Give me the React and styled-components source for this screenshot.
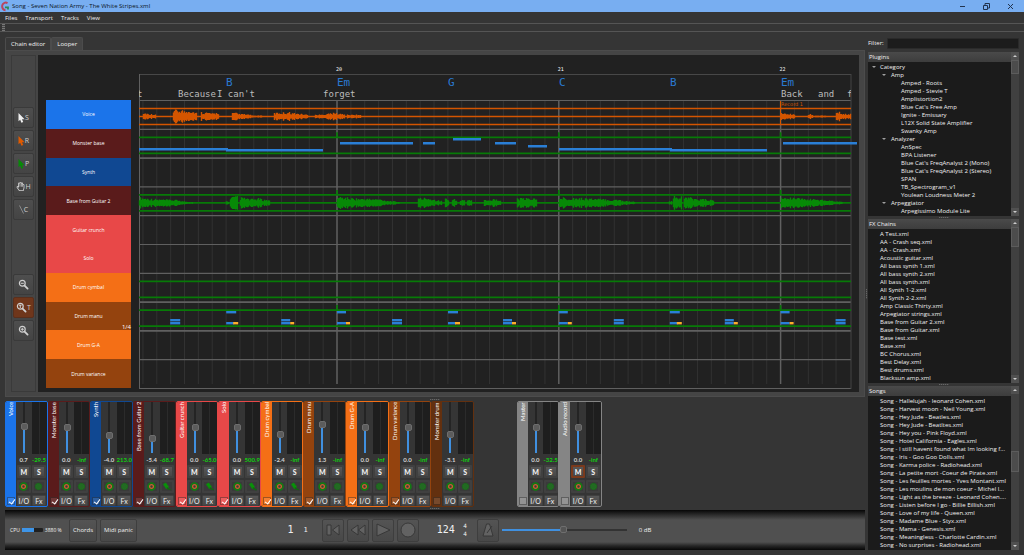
import React from "react";
import styled, { createGlobalStyle, css } from "styled-components";
import { FaRegHandPaper } from "react-icons/fa";

const GlobalStyle = createGlobalStyle`
  * {
    box-sizing: border-box;
  }

  body {
    margin: 0;
    background: #353535;
    color: #f0f0f0;
    font-family: "Open Sans", "Noto Sans", sans-serif;
    font-size: 6px;
    line-height: 8px;
  }

  button, input {
    font: inherit;
    color: inherit;
    margin: 0;
    padding: 0;
  }

  svg {
    flex-shrink: 0;
  }

  ul {
    list-style: none;
    margin: 0;
    padding: 0;
  }
`;

const NARROW_FONT = `Lato, "Open Sans", sans-serif`;
const MONO_FONT = `"DejaVu Sans Mono", "Liberation Mono", monospace`;

const Window = styled.div`
  min-height: 100vh;
  display: flex;
  flex-direction: column;
`;

/* ---------- Title bar and menus ---------- */

const TitleBar = styled.header`
  height: 12px;
  display: flex;
  align-items: center;
  gap: 3px;
  background: #78aef1;
  color: #0c1424;
`;

const Title = styled.h1`
  flex: 1;
  margin: 0;
  font-size: 6px;
  font-weight: 400;
`;

const WindowButtons = styled.div`
  display: flex;
  padding-right: 2px;
`;

const WindowButton = styled.button`
  width: 24px;
  height: 12px;
  border: none;
  background: none;
  display: flex;
  align-items: center;
  justify-content: center;
`;

const MenuBar = styled.nav`
  height: 11px;
  display: flex;
  align-items: center;
  gap: 8px;
  padding: 0 5px;
`;

const MenuButton = styled.button`
  border: none;
  background: none;
`;

const DockBar = styled.div`
  height: 9px;
  border-top: 1px solid #555;
  border-bottom: 1px solid #555;
  padding: 0 2px;

  &::before {
    content: "";
    display: block;
    width: 3px;
    height: 7px;
    background: repeating-linear-gradient(#777 0 1px, #444 1px 2px);
  }
`;

/* ---------- Page columns ---------- */

const Workspace = styled.main`
  flex: 1;
  display: flex;
  padding: 5px;
`;

const LeftColumn = styled.div`
  flex: 1;
  min-width: 0;
  display: flex;
  flex-direction: column;
`;

const RightColumn = styled.aside`
  width: 151px;
  display: flex;
  flex-direction: column;
`;

// Handle of a splitter between two panes
const Grip = styled.div`
  flex: none;
  ${({ $vertical, $size }) => ($vertical ? `width: ${$size}px;` : `height: ${$size}px;`)}
  display: flex;
  align-items: center;
  justify-content: center;

  &::before {
    content: "";
    width: ${({ $vertical }) => ($vertical ? "1px" : "10px")};
    height: ${({ $vertical }) => ($vertical ? "10px" : "1px")};
    background: repeating-linear-gradient(
      ${({ $vertical }) => ($vertical ? "to bottom" : "to right")},
      #666 0 1px,
      #444 1px 2px
    );
  }
`;

const Tabs = styled.div`
  display: flex;
  height: 13px;
`;

const Tab = styled.button`
  border: 1px solid #4c4c4c;
  border-bottom: none;
  border-radius: 2px 2px 0 0;
  padding: 0 5px;
  background: ${({ $active }) => ($active ? "#454545" : "#383838")};
`;

const LooperPanel = styled.section`
  display: flex;
  gap: 2px;
  padding: 4px 5px;
  background: #454545;
  border: 1px solid #4c4c4c;
`;

const ToolStrip = styled.div`
  width: 25px;
  display: flex;
  flex-direction: column;
  align-items: center;
  gap: 54px;
  padding-top: 51px;
  border: 1px solid #3a3a3a;
`;

const ToolGroup = styled.div`
  display: flex;
  flex-direction: column;
  gap: 2px;
`;

const ToolButton = styled.button`
  width: 21px;
  height: 21px;
  display: flex;
  align-items: center;
  justify-content: center;
  font-size: 7px;
  color: #d0d0d0;
  border: 1px solid ${({ $active }) => ($active ? "#5a2f1c" : "#3a3a3a")};
  border-radius: 2px;
  background: ${({ $active }) => ($active ? "#6f361b" : "linear-gradient(#4e4e4e, #444)")};
`;

/* ---------- Arrangement ---------- */

const Canvas = styled.div`
  flex: 1;
  min-width: 0;
  display: flex;
  gap: 8px;
  padding: 0 8px;
  background: #212121;
`;

const TrackNames = styled.ul`
  width: 85px;
  height: 288px;
  margin-top: 45px;
  display: flex;
  flex-direction: column;
  font-size: 5px;
`;

const TrackName = styled.li`
  flex: 1;
  position: relative;
  display: flex;
  align-items: center;
  justify-content: center;
  background: ${({ $color }) => $color};
  color: #fff;
`;

const Division = styled.span`
  position: absolute;
  right: 0;
  bottom: 0;
  font-size: 6px;
  line-height: 6px;
`;

const Timeline = styled.svg`
  flex: 1;
  min-width: 0;
  height: 337px;
  overflow: visible;
  font-family: ${MONO_FONT};
`;

/* ---------- Mixer ---------- */

const Mixer = styled.section`
  max-width: 597px;
  display: grid;
  grid-template-columns: repeat(14, 1fr);
  font-family: ${NARROW_FONT};
`;

const Strip = styled.article`
  grid-column: ${({ $column }) => $column};
  min-width: 0;
  height: 106px;
  display: flex;
  border: 1px solid ${({ $color }) => $color};
  border-radius: 2px;
  overflow: hidden;
`;

const StripSide = styled.div`
  width: 10px;
  display: flex;
  flex-direction: column;
  align-items: center;
  justify-content: space-between;
  padding-bottom: 1px;
  background: ${({ $color }) => $color};
`;

const StripName = styled.label`
  height: 90px;
  writing-mode: vertical-rl;
  transform: rotate(180deg);
  text-align: right;
  color: #fff;
`;

const StripCheck = styled.input`
  appearance: none;
  width: 8px;
  height: 8px;
  border: 1px solid rgba(0, 0, 0, 0.35);
  background: rgba(255, 255, 255, 0.12);

  &:checked::before {
    content: "";
    display: block;
    width: 3px;
    height: 5px;
    margin-left: 2px;
    border: solid #fff;
    border-width: 0 1px 1px 0;
    transform: rotate(35deg);
  }
`;

const StripBody = styled.div`
  flex: 1;
  min-width: 0;
  display: flex;
  flex-direction: column;
  align-items: center;
`;

const FaderRow = styled.div`
  align-self: stretch;
  flex: none;
  height: 52px;
  display: flex;
  justify-content: space-between;
  padding-left: 4px;
`;

const Fader = styled.input`
  appearance: none;
  writing-mode: vertical-lr;
  direction: rtl;
  width: 8px;
  height: 51px;
  background: none;

  &::-webkit-slider-runnable-track {
    width: 2px;
    background: linear-gradient(
      to top,
      #4090e0 ${({ value }) => value}%,
      #242424 ${({ value }) => value}%
    );
  }

  &::-webkit-slider-thumb {
    appearance: none;
    width: 7px;
    height: 7px;
    margin-left: -2px;
    border: 1px solid #6e6e6e;
    border-radius: 2px;
    background: #5c5c5c;
  }
`;

const Meter = styled.div`
  width: 15px;
  background: linear-gradient(to right, #1e1e1e 7px, #2b2b2b 7px 8px, #1e1e1e 8px);
`;

const Levels = styled.div`
  align-self: stretch;
  flex: none;
  height: 11px;
  display: flex;
  align-items: center;
`;

const Level = styled.output`
  width: 50%;
  white-space: nowrap;
  text-align: center;
  font-weight: 700;
  color: ${({ $green }) => ($green ? "#10d010" : "#d4d4d4")};
`;

const StripButtons = styled.div`
  display: grid;
  grid-template-columns: 14px 14px;
  gap: 2px 1px;
`;

const StripButton = styled.button`
  height: ${({ $low }) => ($low ? "11px" : "13px")};
  display: flex;
  align-items: center;
  justify-content: center;
  overflow: hidden;
  border: ${({ $low }) => ($low ? "1px" : "2px")} solid ${({ $lit }) => ($lit ? "#7a3a1c" : "#404040")};
  border-radius: 1px;
  background: ${({ $dark }) => ($dark ? "#3a3a3a" : "linear-gradient(#585858, #474747)")};
  font-size: 7px;
  font-weight: ${({ $low }) => ($low ? 400 : 900)};
`;

/* ---------- Transport ---------- */

const Transport = styled.footer`
  height: 40px;
  display: flex;
  align-items: center;
  padding: 0 5px;
  background: linear-gradient(#060606, #252525 4px, #505050 10px, #505050 32px, #252525 36px, #060606);
`;

const Cpu = styled.div`
  width: 59px;
  display: flex;
  align-items: center;
  gap: 2px;
  font-size: 5px;
`;

const CpuBar = styled.div`
  width: 21px;
  height: 4px;
  border-radius: 1px;
  background: #202020;

  &::before {
    content: "";
    display: block;
    width: 12px;
    height: 4px;
    background: #3e95e8;
  }
`;

const buttonFace = css`
  height: 23px;
  border: 1px solid #3e3e3e;
  border-radius: 2px;
  background: linear-gradient(#545454, #484848);
`;

const TextButton = styled.button`
  ${buttonFace}
  padding: 0 3px;
  margin-right: 3px;
`;

const TransportButton = styled.button`
  ${buttonFace}
  width: 22px;
  display: flex;
  align-items: center;
  justify-content: center;
`;

const Position = styled.div`
  width: 182px;
  display: flex;
  justify-content: flex-end;
  align-items: center;
  gap: 10px;
  padding-right: 14px;
  font-family: ${MONO_FONT};
`;

const Beat = styled.span`
  font-size: ${({ $small }) => ($small ? "7px" : "10px")};
`;

const TransportKeys = styled.div`
  display: flex;
  gap: 3px;
`;

const Tempo = styled.div`
  width: 58px;
  display: flex;
  align-items: center;
  justify-content: space-between;
  padding: 0 10px 0 18px;
  font-family: ${MONO_FONT};
`;

const Bpm = styled.span`
  font-size: 10px;
`;

const Signature = styled.span`
  display: flex;
  flex-direction: column;
`;

const Volume = styled.input`
  appearance: none;
  width: 125px;
  height: 8px;
  margin: 0 12px 0 3px;
  background: none;

  &::-webkit-slider-runnable-track {
    height: 2px;
    background: linear-gradient(to right, #4090e0 50%, #333 50%);
  }

  &::-webkit-slider-thumb {
    appearance: none;
    width: 7px;
    height: 7px;
    margin-top: -3px;
    border: 1px solid #6e6e6e;
    border-radius: 2px;
    background: #555;
  }
`;

/* ---------- Browser lists ---------- */

const FilterRow = styled.div`
  height: 12px;
  margin-bottom: 3px;
  display: flex;
  align-items: center;
  gap: 3px;
`;

const FilterInput = styled.input`
  flex: 1;
  min-width: 0;
  height: 11px;
  border: 1px solid #2a2a2a;
  border-radius: 1px;
  background: #1c1c1c;
`;

const ListPanel = styled.section`
  flex: 1 1 0;
  min-height: 0;
  display: flex;
`;

const ListArea = styled.div`
  flex: 1;
  min-width: 0;
  background: #1b1b1b;
`;

const ListTitle = styled.h2`
  height: 10px;
  margin: 0 0 1px;
  padding-left: 1px;
  background: linear-gradient(#4a4a4a, #3d3d3d);
  font-size: 6px;
  line-height: 10px;
  font-weight: 400;
`;

const Row = styled.li`
  height: 8px;
  padding-left: ${({ $level }) => ($level === 2 ? "33px" : $level === 1 ? "23px" : "12px")};
  white-space: nowrap;
  position: relative;
`;

const Caret = styled.span`
  position: absolute;
  top: 3px;
  left: ${({ $level }) => ($level === 1 ? "14px" : "4px")};
  border: 2px solid transparent;
  border-top-color: #a0a0a0;
  border-bottom: none;
`;

const ScrollBar = styled.div`
  width: 8px;
  display: flex;
  flex-direction: column;
  background: #404040;
`;

const ScrollArrow = styled.button`
  width: 8px;
  height: 8px;
  border: none;
  background: #505050;
  display: flex;
  align-items: center;
  justify-content: center;

  &::before {
    content: "";
    border: 2px solid transparent;
    ${({ $up }) =>
      $up
        ? "border-bottom-color: #ccc; border-top: none;"
        : "border-top-color: #ccc; border-bottom: none;"}
  }
`;

const ScrollTrack = styled.div`
  flex: 1;
  padding-top: ${({ $offset }) => $offset}px;
`;

const ScrollThumb = styled.div`
  height: ${({ $size }) => $size}px;
  border: 1px solid #5c5c5c;
  background: #4c4c4c;
`;

/* ---------- Data ---------- */

const tracks = [
  { name: "Voice", color: "#1b74ea" },
  { name: "Monster base", color: "#5a1b1b" },
  { name: "Synth", color: "#104892" },
  { name: "Base from Guitar 2", color: "#5a1b1b" },
  { name: "Guitar crunch", color: "#e84848" },
  { name: "Solo", color: "#e84848" },
  { name: "Drum cymbal", color: "#f46f16" },
  { name: "Drum manu", color: "#94430e", division: "1/4" },
  { name: "Drum G-A", color: "#f46f16" },
  { name: "Drum variance", color: "#94430e" },
];

const strips = [
  { name: "Voice", color: "#1b74ea", fader: 53, gain: "0.7", peak: "-29.5" },
  { name: "Monster base", color: "#5a1b1b", fader: 49, gain: "0.0", peak: "-inf" },
  { name: "Synth", color: "#104892", fader: 31, gain: "-4.0", peak: "213.0" },
  { name: "Base from Guitar 2", color: "#5a1b1b", fader: 26, gain: "-5.4", peak: "-68.7", jack: true },
  { name: "Guitar crunch", color: "#e84848", fader: 49, gain: "0.0", peak: "-65.0", jack: true },
  { name: "Solo", color: "#e84848", fader: 49, gain: "0.0", peak: "500.9", jack: true },
  { name: "Drum cymbal", color: "#f46f16", fader: 35, gain: "-2.4", peak: "-inf", jack: true },
  { name: "Drum manu", color: "#94430e", fader: 57, gain: "1.3", peak: "-inf" },
  { name: "Drum G-A", color: "#f46f16", fader: 49, gain: "0.0", peak: "-inf" },
  { name: "Drum variance", color: "#94430e", fader: 49, gain: "0.0", peak: "-inf" },
  { name: "Monster drum", color: "#63300f", fader: 33, gain: "-3.1", peak: "-inf", off: true },
  { name: "Master", color: "#858585", fader: 49, gain: "0.0", peak: "-32.5", off: true, column: 13 },
  { name: "Audio record", color: "#858585", fader: 49, gain: "0.0", peak: "-inf", off: true, muted: true, column: 14 },
];

const plugins = [
  [0, "Category"],
  [1, "Amp"],
  [2, "Amped - Roots"],
  [2, "Amped - Stevie T"],
  [2, "Amplistortion2"],
  [2, "Blue Cat's Free Amp"],
  [2, "Ignite - Emissary"],
  [2, "L12X Solid State Amplifier"],
  [2, "Swanky Amp"],
  [1, "Analyzer"],
  [2, "AnSpec"],
  [2, "BPA Listener"],
  [2, "Blue Cat's FreqAnalyst 2 (Mono)"],
  [2, "Blue Cat's FreqAnalyst 2 (Stereo)"],
  [2, "SPAN"],
  [2, "TB_Spectrogram_v1"],
  [2, "Youlean Loudness Meter 2"],
  [1, "Arpeggiator"],
  [2, "Arpegissimo Module Lite"],
];

const chains = [
  "A Test.xml", "AA - Crash seq.xml", "AA - Crash.xml", "Acoustic guitar.xml",
  "All bass synth 1.xml", "All bass synth 2.xml", "All bass synth.xml",
  "All Synth 1-2.xml", "All Synth 2-2.xml", "Amp Classic Thirty.xml",
  "Arpegiator strings.xml", "Base from Guitar 2.xml", "Base from Guitar.xml",
  "Base test.xml", "Base.xml", "BC Chorus.xml", "Best Delay.xml",
  "Best drums.xml", "Blacksun amp.xml",
];

const songs = [
  "Song - Hallelujah - leonard Cohen.xml",
  "Song - Harvest moon - Neil Young.xml",
  "Song - Hey Jude - Beatles.xml",
  "Song - Hey Jude - Beatltes.xml",
  "Song - Hey you - Pink Floyd.xml",
  "Song - Hotel California - Eagles.xml",
  "Song - I still havent found what Im looking f...",
  "Song - Iris - Goo Goo Dolls.xml",
  "Song - Karma police - Radiohead.xml",
  "Song - La petite mort -Coeur de Pirate.xml",
  "Song - Les feuilles mortes - Yves Montant.xml",
  "Song - Les moulins de mon coeur - Michel l...",
  "Song - Light as the breeze - Leonard Cohen....",
  "Song - Listen before I go - Billie Eillish.xml",
  "Song - Love of my life - Queen.xml",
  "Song - Madame Blue - Styx.xml",
  "Song - Mama - Genesis.xml",
  "Song - Meaningless - Charlotte Cardin.xml",
  "Song - No surprises - Radiohead.xml",
];

/* ---------- Timeline drawing ---------- */

const MEASURE = 221.8;
const FIRST = 198;
const TOP = 45;
const TRACK = 28.8;
const measures = [20, 21, 22];

// Bursts are [start, end, amplitude at start, amplitude at end]
const voiceBursts = [
  [4, 17, 4, 2], [34, 44, 7, 7], [44, 49, 6, 6], [49, 50, 9, 9], [50, 58, 7, 4], [62, 72, 5, 4],
  [72, 80, 3, 5], [93, 98, 4, 4], [98, 112, 3, 2], [112, 125, 1, 1], [135, 152, 4, 5],
  [152, 169, 4, 2], [176, 184, 2, 2], [184, 198, 3, 4], [198, 206, 3, 3], [208, 222, 2, 2],
  [642, 656, 4, 2], [669, 674, 3, 2], [676, 688, 1, 1], [697, 701, 5, 5], [701, 712, 3, 3],
];

const guitarBursts = [
  [0, 18, 6, 4], [18, 42, 4, 3], [42, 54, 2, 1], [87, 90, 2, 2], [91, 99, 7, 7], [101, 109, 6, 5],
  [109, 122, 4, 5], [122, 131, 4, 3], [198, 214, 7, 5], [214, 244, 5, 4], [244, 261, 3, 1],
  [279, 290, 5, 6], [290, 303, 5, 2], [306, 310, 5, 5], [313, 318, 4, 4], [321, 326, 4, 3],
  [328, 333, 3, 3], [345, 354, 4, 3], [354, 362, 5, 2], [378, 398, 5, 5], [420, 452, 6, 5],
  [452, 476, 5, 3], [476, 496, 4, 1], [530, 533, 2, 2], [534, 543, 7, 7], [545, 554, 7, 5],
  [554, 575, 5, 3], [642, 660, 6, 5], [660, 690, 5, 3], [690, 704, 3, 1],
];

function wavePath(bursts, middle) {
  let d = "";
  bursts.forEach(([start, end, from, to]) => {
    for (let x = start; x < end; x += 1) {
      const noise = Math.abs(Math.sin(x * 12.9898) * 43758.5453) % 1;
      const amp = (from + ((to - from) * (x - start)) / (end - start)) * (0.45 + 0.55 * noise);
      d += `M${x + 0.5} ${(middle - amp).toFixed(1)}V${(middle + amp).toFixed(1)}`;
    }
  });
  return d;
}

// [x, y, width]
const bassNotes = [
  [0, 93, 89], [87, 94, 97], [201, 87, 73], [284, 87, 12], [314, 83, 28], [356, 87, 21],
  [389, 90, 19], [420, 93, 113], [531, 94, 97], [644, 87, 74],
];

const chords = [[87, "B"], [198, "Em"], [309, "G"], [420, "C"], [531, "B"], [642, "Em"]];
const lyrics = [[39, "Because"], [78, "I can't"], [184, "forget"], [642, "Back"], [679, "and"]];

function drumNotes() {
  const out = [];
  for (let m = -1; m < 3; m += 1) {
    const x = FIRST + m * MEASURE;
    out.push([x, 257, 9], [x, 268, 9], [x + 9, 268, 4, true]);
    out.push([x + 55, 265, 10], [x + 55, 268, 10]);
    out.push([x + 111, 257, 10], [x + 111, 268, 8], [x + 118, 268, 5, true]);
    out.push([x + 166, 265, 9], [x + 166, 268, 9], [x + 175, 268, 4, true]);
  }
  return out.filter(([x]) => x >= 0 && x < 710);
}

function Arrangement() {
  const divisions = [];
  for (let i = -14; i < 37; i += 1) {
    if (i % 16 !== 0) divisions.push(FIRST + (i * MEASURE) / 16);
  }
  const middle = (track) => TOP + TRACK * track + 16.5;

  return (
    <Timeline role="img" aria-label="Arrangement">
      <g stroke="#323232">
        {divisions.map((x) => (
          <line key={x} x1={x} x2={x} y1={TOP} y2="329" />
        ))}
      </g>
      <g stroke="#606060">
        <line x1="0" x2="100%" y1="19.5" y2="19.5" stroke="#484848" />
        {tracks.map((t, i) => (
          <line
            key={t.name}
            x1="0"
            x2="100%"
            y1={TOP + 0.5 + TRACK * i}
            y2={TOP + 0.5 + TRACK * i}
            strokeWidth={[2, 7, 8].includes(i) ? 1.7 : 1.2}
          />
        ))}
        <line x1="0" x2="100%" y1="333.5" y2="333.5" />
        <line x1="0.5" x2="0.5" y1="19" y2="334" />
        <line x1="100%" x2="100%" y1="19" y2="334" stroke="#444" />
        {measures.map((m, i) => (
          <line
            key={m}
            x1={FIRST + i * MEASURE}
            x2={FIRST + i * MEASURE}
            y1={TOP}
            y2="329"
            strokeWidth="1.5"
          />
        ))}
      </g>

      {/* Clip borders */}
      {[0, 1, 3, 6, 7].map((track) => (
        <g key={track} stroke={track === 0 ? "#d45500" : "#077a07"} strokeWidth="1.7">
          <line x1="0" x2="100%" y1={middle(track) - 8} y2={middle(track) - 8} />
          <line x1="0" x2="100%" y1={middle(track) + 8} y2={middle(track) + 8} />
          {[0, 3].includes(track) && (
            <line x1="0" x2="100%" y1={middle(track)} y2={middle(track)} />
          )}
          {[1, 3, 7].includes(track) &&
            measures.map((m, i) => (
              <line
                key={m}
                x1={FIRST + i * MEASURE}
                x2={FIRST + i * MEASURE}
                y1={middle(track) - 13}
                y2={middle(track) - 8}
              />
            ))}
        </g>
      ))}
      <line x1="641.5" x2="641.5" y1="46" y2="69" stroke="#d45500" />

      <path d={wavePath(voiceBursts, middle(0))} stroke="#d45500" strokeWidth="1.4" />
      <path d={wavePath(guitarBursts, middle(3))} stroke="#078a07" strokeWidth="1.4" />

      {bassNotes.map(([x, y, w]) => (
        <rect key={x} x={x} y={y} width={w} height="2.5" fill="#2a7fd6" />
      ))}
      {drumNotes().map(([x, y, w, accent], i) => (
        <rect key={i} x={x} y={y - 1} width={w} height="2.4" fill={accent ? "#fcae2c" : "#2a7fd6"} />
      ))}

      <g fontSize="5" fill="#fff">
        {measures.map((m, i) => (
          <text key={m} x={FIRST - 1 + i * MEASURE} y="16">{m}</text>
        ))}
      </g>
      <g fontSize="11" fill="#2a7ad2">
        {chords.map(([x, name]) => (
          <text key={x} x={x} y="31">{name}</text>
        ))}
      </g>
      <g fontSize="9" fill="#bcbcbc">
        {lyrics.map(([x, word]) => (
          <text key={x} x={x} y="42">{word}</text>
        ))}
        <svg x="0" y="30" width="4" height="14">
          <text x="-2" y="12">t</text>
        </svg>
        <svg x="708" y="30" width="4" height="14">
          <text x="0" y="12">f</text>
        </svg>
      </g>
      <text x="642" y="51" fontSize="5" fontFamily="DejaVu Sans, sans-serif" fill="#d45500">Record 1</text>
    </Timeline>
  );
}

/* ---------- Icons ---------- */

const CursorIcon = ({ color }) => (
  <svg width="7" height="10" viewBox="0 0 7 10">
    <path d="M0.5 0V8.2L2.2 6.8L3.4 9.8L5.2 9L4 6.2H6.6Z" fill={color} />
  </svg>
);

const ZoomIcon = ({ plus, minus, time }) => (
  <svg width="11" height="11" viewBox="0 0 11 11" fill="none" stroke="#d0d0d0">
    <circle cx="4.3" cy="4.3" r="2.9" strokeWidth="1.2" />
    <path d="M6.6 6.6L9.6 9.6" strokeWidth="1.8" strokeLinecap="round" />
    {(plus || minus) && <path d="M2.8 4.3H5.8" strokeWidth="1" />}
    {plus && <path d="M4.3 2.8V5.8" strokeWidth="1" />}
    {time && <path d="M3 3.2H5.6M4.3 3V6" strokeWidth="1" />}
  </svg>
);

const RecordIcon = () => (
  <svg width="9" height="9" viewBox="0 0 9 9" fill="none">
    <circle cx="4.5" cy="4.5" r="3.5" stroke="#108010" strokeWidth="1.5" />
    <circle cx="4.5" cy="4.5" r="1.9" stroke="#c8682e" strokeWidth="1.3" />
  </svg>
);

const MonitorIcon = () => (
  <svg width="9" height="9" viewBox="0 0 9 9">
    <circle cx="4.5" cy="4.5" r="3.2" fill="#226a22" stroke="#187018" strokeDasharray="1.2 0.6" />
  </svg>
);

const JackIcon = () => (
  <svg width="9" height="9" viewBox="0 0 9 9" fill="none">
    <path d="M1 2.3L3.8 0.5L7 5L4.2 7Z" fill="#0a900a" />
    <path d="M5 5.6Q5.8 7.6 8.6 7.6" stroke="#0a700a" strokeWidth="1.3" />
  </svg>
);

const KeyIcon = ({ children }) => (
  <svg width="16" height="16" viewBox="0 0 16 16" fill="#626262" stroke="#343434" strokeWidth="0.9">
    {children}
  </svg>
);

/* ---------- Parts ---------- */

function MixerStrip({ strip }) {
  const id = `strip-${strip.name.toLowerCase().replace(/ /g, "-")}`;
  return (
    <Strip $color={strip.color} $column={strip.column || "auto"}>
      <StripSide $color={strip.color}>
        <StripName htmlFor={id}>{strip.name}</StripName>
        <StripCheck type="checkbox" id={id} defaultChecked={!strip.off} />
      </StripSide>
      <StripBody>
        <FaderRow>
          <Fader type="range" min="0" max="100" value={strip.fader} readOnly aria-label={`${strip.name} volume`} />
          <Meter />
        </FaderRow>
        <Levels>
          <Level>{strip.gain}</Level>
          <Level $green>{strip.peak}</Level>
        </Levels>
        <StripButtons>
          <StripButton $lit={strip.muted}>M</StripButton>
          <StripButton>S</StripButton>
          <StripButton $dark aria-label="Record"><RecordIcon /></StripButton>
          <StripButton $dark aria-label="Monitor">{strip.jack ? <JackIcon /> : <MonitorIcon />}</StripButton>
          <StripButton $low>I/O</StripButton>
          <StripButton $low>Fx</StripButton>
        </StripButtons>
      </StripBody>
    </Strip>
  );
}

function BrowserList({ title, rows, offset, size }) {
  return (
    <ListPanel>
      <ListArea>
        <ListTitle>{title}</ListTitle>
        <ul>
          {rows.map(([level, text], i) => (
            <Row key={i} $level={level}>
              {title === "Plugins" && level < 2 && <Caret $level={level} />}
              {text}
            </Row>
          ))}
        </ul>
      </ListArea>
      <ScrollBar>
        <ScrollArrow $up aria-label="Scroll up" />
        <ScrollTrack $offset={offset}>
          <ScrollThumb $size={size} />
        </ScrollTrack>
        <ScrollArrow aria-label="Scroll down" />
      </ScrollBar>
    </ListPanel>
  );
}

export default function App() {
  return (
    <>
      <GlobalStyle />
      <Window>
        <TitleBar>
          <svg width="9" height="11" viewBox="0 0 9 11" fill="none">
            <path d="M7.5 2.2A3.5 3.8 0 1 0 5.5 9.2" stroke="#b8455e" strokeWidth="2" />
            <path d="M5 6.3H8V8.6" stroke="#2c8a58" strokeWidth="1.8" />
          </svg>
          <Title>Song - Seven Nation Army - The White Stripes.xml</Title>
          <WindowButtons>
            <WindowButton aria-label="Minimize">
              <svg width="7" height="7"><path d="M1 3.5H6" stroke="#22344f" /></svg>
            </WindowButton>
            <WindowButton aria-label="Restore">
              <svg width="7" height="7" fill="none" stroke="#22344f">
                <path d="M0.5 2.5H4.5V6.5H0.5ZM2 2V0.5H6.5V5H5" />
              </svg>
            </WindowButton>
            <WindowButton aria-label="Close">
              <svg width="7" height="7"><path d="M1 1L6 6M6 1L1 6" stroke="#22344f" /></svg>
            </WindowButton>
          </WindowButtons>
        </TitleBar>

        <MenuBar>
          <MenuButton>Files</MenuButton>
          <MenuButton>Transport</MenuButton>
          <MenuButton>Tracks</MenuButton>
          <MenuButton>View</MenuButton>
        </MenuBar>
        <DockBar />

        <Workspace>
          <LeftColumn>
            <Tabs>
              <Tab>Chain editor</Tab>
              <Tab $active>Looper</Tab>
            </Tabs>

            <LooperPanel>
              <ToolStrip>
                <ToolGroup>
                  <ToolButton><CursorIcon color="#f0f0f0" />S</ToolButton>
                  <ToolButton><CursorIcon color="#e05a00" />R</ToolButton>
                  <ToolButton><CursorIcon color="#078a07" />P</ToolButton>
                  <ToolButton><FaRegHandPaper size={9} />H</ToolButton>
                  <ToolButton>
                    <svg width="5" height="9"><path d="M0.5 0.5L4.5 8.5" stroke="#8a8a8a" /></svg>C
                  </ToolButton>
                </ToolGroup>
                <ToolGroup>
                  <ToolButton aria-label="Zoom out"><ZoomIcon minus /></ToolButton>
                  <ToolButton $active><ZoomIcon time />T</ToolButton>
                  <ToolButton aria-label="Zoom in"><ZoomIcon plus /></ToolButton>
                </ToolGroup>
              </ToolStrip>
              <Canvas>
                <TrackNames>
                  {tracks.map((track) => (
                    <TrackName key={track.name} $color={track.color}>
                      {track.name}
                      {track.division && <Division>{track.division}</Division>}
                    </TrackName>
                  ))}
                </TrackNames>
                <Arrangement />
              </Canvas>
            </LooperPanel>

            <Grip $size={4} />
            <Mixer>
              {strips.map((strip) => (
                <MixerStrip key={strip.name} strip={strip} />
              ))}
            </Mixer>
            <Grip $size={3} />

            <Transport>
              <Cpu>
                <span>CPU</span>
                <CpuBar />
                <span>3880 %</span>
              </Cpu>
              <TextButton>Chords</TextButton>
              <TextButton>Midi panic</TextButton>
              <Position>
                <Beat>1</Beat>
                <Beat $small>1</Beat>
              </Position>
              <TransportKeys>
                <TransportButton aria-label="Go to start">
                  <KeyIcon><path d="M2 3H6V13H2ZM14 3V13L7.5 8Z" /></KeyIcon>
                </TransportButton>
                <TransportButton aria-label="Rewind">
                  <KeyIcon><path d="M8 3V13L1 8ZM15 3V13L8.5 8Z" /></KeyIcon>
                </TransportButton>
                <TransportButton aria-label="Play">
                  <KeyIcon><path d="M2 2V14L15 8Z" /></KeyIcon>
                </TransportButton>
                <TransportButton aria-label="Record">
                  <KeyIcon><circle cx="8" cy="8" r="7" /></KeyIcon>
                </TransportButton>
              </TransportKeys>
              <Tempo>
                <Bpm>124</Bpm>
                <Signature>
                  <span>4</span>
                  <span>4</span>
                </Signature>
              </Tempo>
              <TransportButton aria-label="Metronome">
                <KeyIcon>
                  <path d="M6.5 2H9.5L13 14H3ZM7 11L12 4" />
                </KeyIcon>
              </TransportButton>
              <Volume type="range" min="0" max="100" defaultValue="49" aria-label="Main volume" />
              <span>0 dB</span>
            </Transport>
          </LeftColumn>

          <Grip $vertical $size={3} />

          <RightColumn>
            <FilterRow>
              <label htmlFor="filter">Filter:</label>
              <FilterInput id="filter" type="text" />
            </FilterRow>
            <BrowserList title="Plugins" rows={plugins} offset={0} size={14} />
            <Grip $size={3} />
            <BrowserList title="FX Chains" rows={chains.map((name) => [0, name])} offset={0} size={20} />
            <Grip $size={3} />
            <BrowserList title="Songs" rows={songs.map((name) => [0, name])} offset={57} size={21} />
          </RightColumn>
        </Workspace>
      </Window>
    </>
  );
}
